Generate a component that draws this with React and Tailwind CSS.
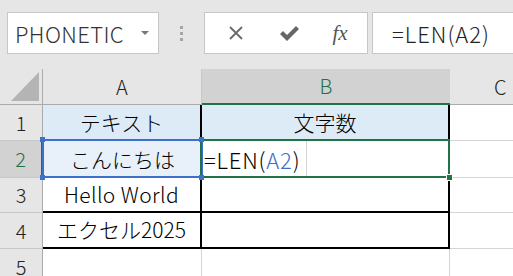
import React from 'react';

const jp = "font-['Noto_Sans_CJK_JP',sans-serif]";

const HeadCell = ({ children, active, className = '' }) => (
  <div
    className={`flex items-center justify-center text-[20px] font-light ${
      active ? 'bg-[#d2d2d2] text-[#217346]' : 'bg-[#e6e6e6] text-[#222]'
    } ${className}`}
  >
    {children}
  </div>
);

const Cell = ({ children, className = '' }) => (
  <div className={`flex items-center justify-center text-[21px] font-light text-black ${className}`}>{children}</div>
);

const App = () => {
  return (
    <div className={`w-[513px] h-[276px] bg-[#e6e6e6] overflow-hidden ${jp}`}>
      {/* toolbar */}
      <div className="flex items-start h-[69px] pt-3 pl-[7px] overflow-hidden">
        <div className="shrink-0 w-[152px] h-[42px] bg-white border border-[#c6c6c6] flex items-center justify-between pl-[7px] pr-[9px]">
          <span className="text-[22px] font-light leading-none text-[#333] tracking-[0.4px]">PHONETIC</span>
          <svg width="8" height="5" viewBox="0 0 8 5"><path d="M0 0h8L4 4z" fill="#777" /></svg>
        </div>
        <div className="shrink-0 w-[45px] h-[42px] flex flex-col items-center justify-center gap-[3px] pr-[1px]">
          <div className="w-[3px] h-[3px] bg-[#a6a6a6]" />
          <div className="w-[3px] h-[3px] bg-[#a6a6a6]" />
          <div className="w-[3px] h-[3px] bg-[#a6a6a6]" />
        </div>
        <div className="shrink-0 w-[164px] h-[42px] bg-white border border-[#c6c6c6] flex items-center">
          <div className="w-[58px] flex justify-center pl-[3px]">
            <svg width="16" height="14" viewBox="0 0 16 14">
              <path d="M2 1l12 12M14 1L2 13" stroke="#6a6a6a" strokeWidth="1.8" />
            </svg>
          </div>
          <div className="w-[52px] flex justify-center">
            <svg width="20" height="15" viewBox="0 0 20 15">
              <path d="M1 8l3-3 4 4L17 0l3 3L8 15z" fill="#666" />
            </svg>
          </div>
          <div className="w-[50px] flex justify-center">
            <span className="font-['Liberation_Serif',serif] italic text-[21px] leading-none text-[#555]">fx</span>
          </div>
        </div>
        <div className="shrink-0 ml-[4px] w-[200px] h-[42px] bg-white border border-[#c6c6c6] flex items-center pl-[19px]">
          <span className="text-[22px] font-light leading-none text-[#222] tracking-[1px]">=LEN(A2)</span>
        </div>
      </div>

      {/* sheet */}
      <div className="relative grid grid-cols-[43px_159px_248px_1fr] grid-rows-[36px_36px_37px_35px_36px_36px]">
        {/* header row */}
        <div className="bg-[#e6e6e6] border-r border-b border-[#ababab] flex items-end justify-end pr-[3px] pb-[3px]">
          <svg width="28" height="29" viewBox="0 0 28 29"><path d="M28 0v29H0z" fill="#b4b4b4" /></svg>
        </div>
        <HeadCell className="border-r border-b border-r-[#c8c8c8] border-b-[#ababab]">A</HeadCell>
        <HeadCell active className="border-b-2 border-[#217346]">B</HeadCell>
        <HeadCell className="border-b border-[#ababab] justify-start pl-[44px]">C</HeadCell>

        {/* row 1 */}
        <HeadCell className="border-r border-b border-r-[#ababab] border-b-[#c8c8c8]">1</HeadCell>
        <Cell className="bg-[#ddebf7] border-r-2 border-black">テキスト</Cell>
        <Cell className="bg-[#ddebf7] border-r-2 border-black">文字数</Cell>
        <div className="bg-white border-b border-[#d4d4d4]" />

        {/* row 2 */}
        <HeadCell active className="border-r-2 border-b border-r-[#217346] border-b-[#c8c8c8]">2</HeadCell>
        <Cell className="bg-[#e8f0fa]">こんにちは</Cell>
        <div className="bg-white flex">
          <div className="w-[105px] h-full border-r border-[#d4d4d4] flex items-center pl-[2px] text-[22px] font-light tracking-[0.8px] text-black">
            =LEN(<span className="text-[#3d6fcb]">A2</span>)
          </div>
        </div>
        <div className="bg-white border-b border-[#d4d4d4]" />

        {/* row 3 */}
        <HeadCell className="border-r border-b border-r-[#ababab] border-b-[#c8c8c8]">3</HeadCell>
        <Cell className="bg-white border-r-2 border-b-2 border-black tracking-[0.4px]">Hello World</Cell>
        <div className="bg-white border-r-2 border-b-2 border-black" />
        <div className="bg-white border-b border-[#d4d4d4]" />

        {/* row 4 */}
        <HeadCell className="border-r border-b border-r-[#ababab] border-b-[#c8c8c8]">4</HeadCell>
        <Cell className="bg-white border-r-2 border-b-2 border-black">エクセル2025</Cell>
        <div className="bg-white border-r-2 border-b-2 border-black" />
        <div className="bg-white border-b border-[#d4d4d4]" />

        {/* row 5 */}
        <HeadCell className="border-r border-b border-r-[#ababab] border-b-[#c8c8c8]">5</HeadCell>
        <div className="bg-white border-r border-b border-[#d4d4d4]" />
        <div className="bg-white border-r border-b border-[#d4d4d4]" />
        <div className="bg-white border-b border-[#d4d4d4]" />

        {/* A2 reference highlight */}
        <div className="absolute left-[42px] top-[70px] w-[161px] h-[39px] border-2 border-[#3d6fcb] pointer-events-none" />
        {/* B2 active cell */}
        <div className="absolute left-[200px] top-[70px] w-[250px] h-[39px] border-2 border-[#217346] pointer-events-none" />
        {/* corner handles */}
        <div className="absolute left-[40px] top-[68px] w-[5px] h-[5px] bg-[#3d6fcb]" />
        <div className="absolute left-[199px] top-[68px] w-[5px] h-[5px] bg-[#3d6fcb]" />
        <div className="absolute left-[40px] top-[106px] w-[5px] h-[5px] bg-[#3d6fcb]" />
        <div className="absolute left-[199px] top-[106px] w-[5px] h-[5px] bg-[#3d6fcb]" />
        <div className="absolute left-[446px] top-[105px] w-[7px] h-[7px] bg-[#217346] border border-white" />
      </div>
    </div>
  );
};

export default App;
